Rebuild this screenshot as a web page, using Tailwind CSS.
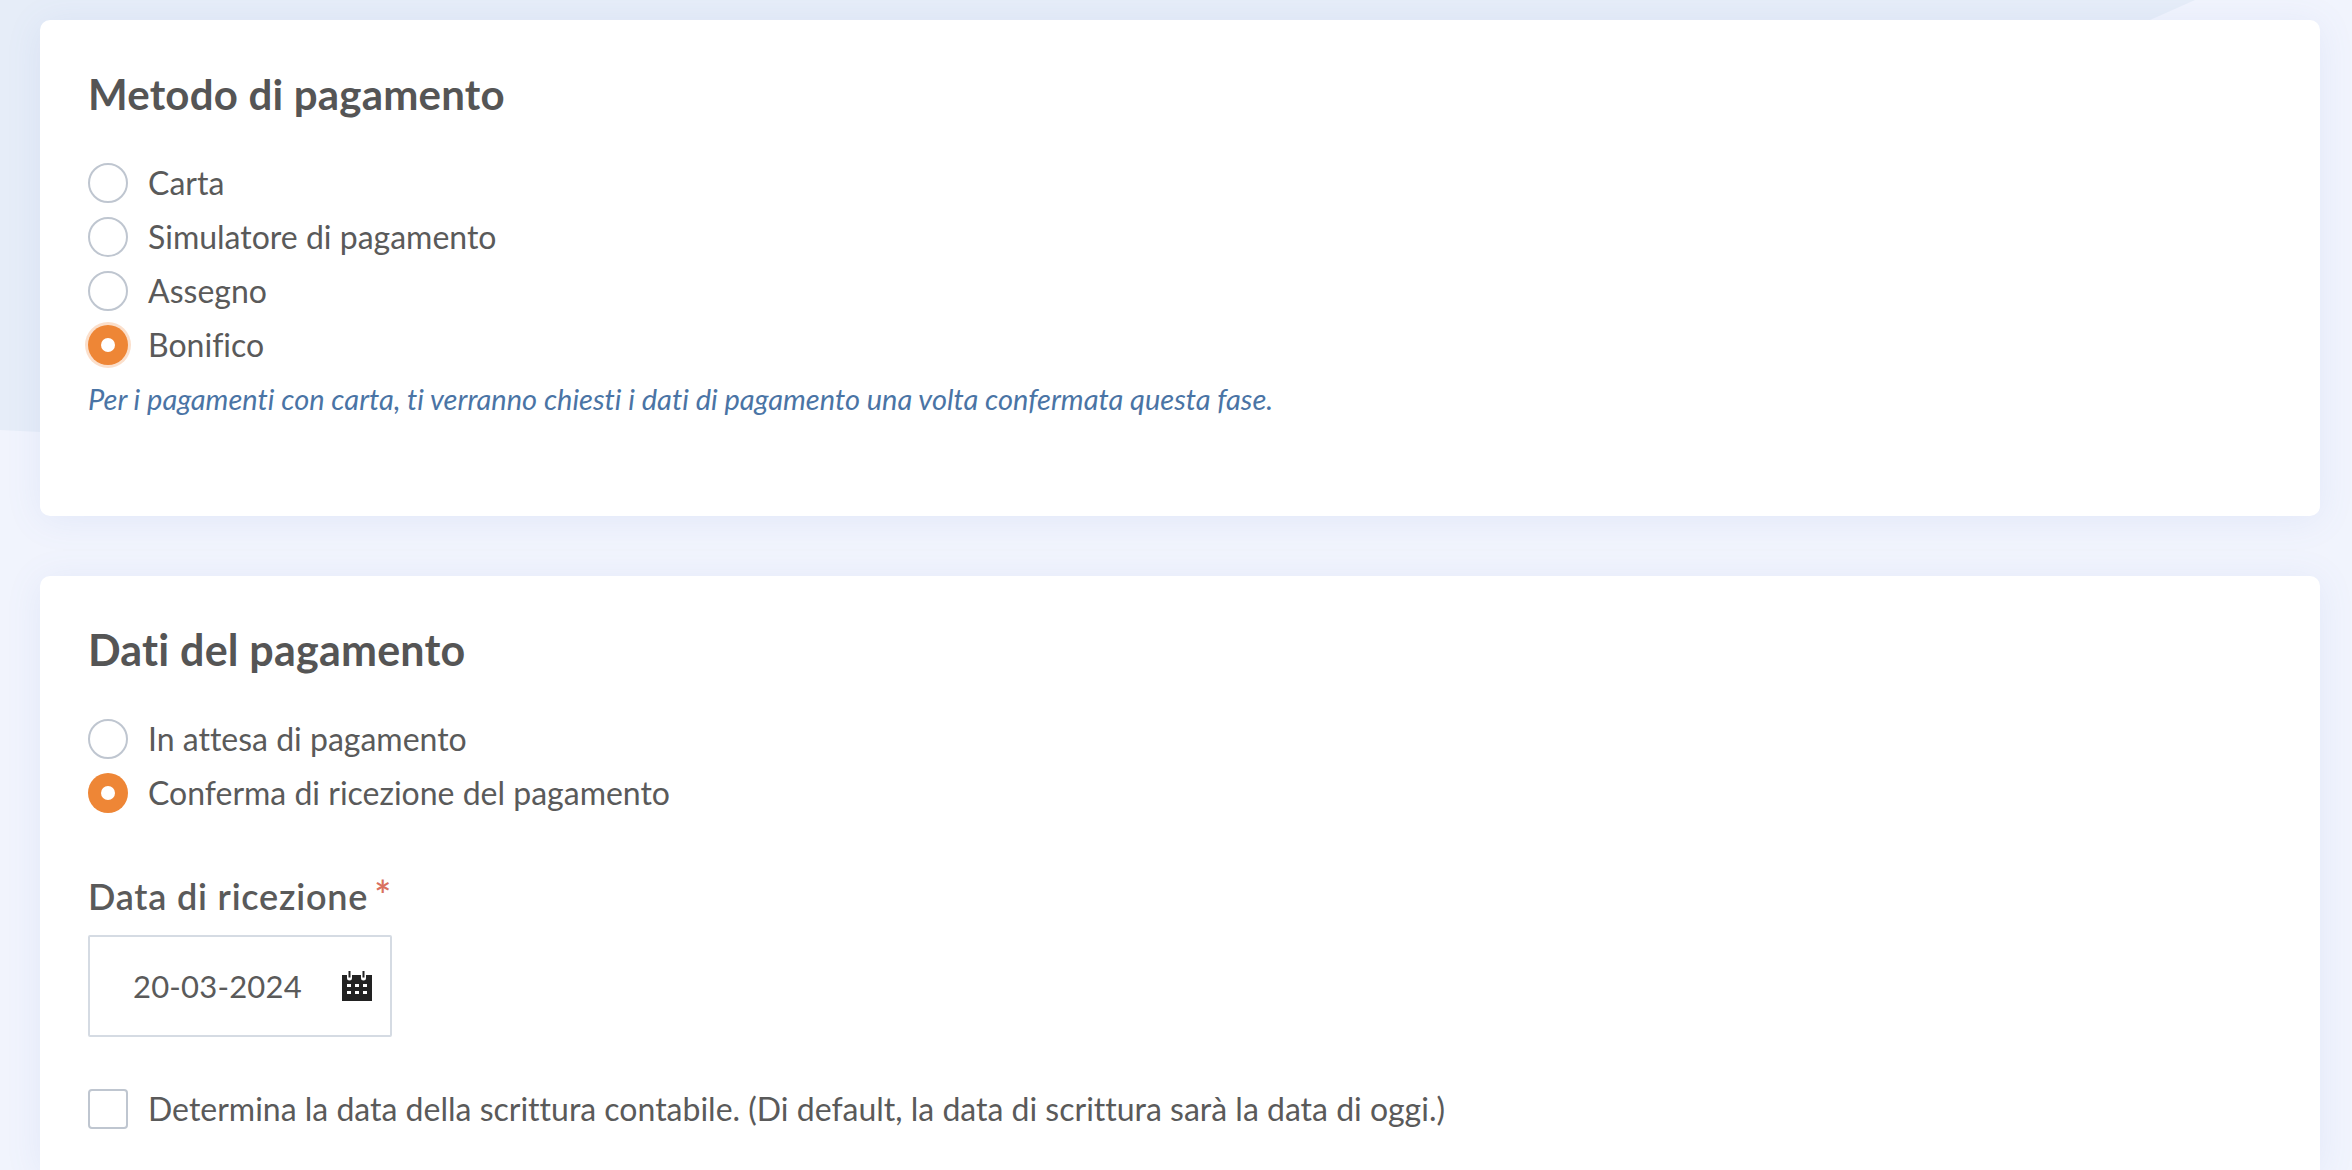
<!DOCTYPE html>
<html lang="it">
<head>
<meta charset="UTF-8">
<title>Pagamento</title>
<script src="https://cdn.jsdelivr.net/npm/@tailwindcss/browser@4"></script>
</head>
<body class="relative h-[1170px] overflow-hidden bg-[#f1f4fd] font-['Lato',sans-serif] text-[32px] text-[#5a5a5a] [font-variant-ligatures:none]">
  <!-- background shape behind the cards -->
  <svg class="absolute left-0 top-0" width="2352" height="440" viewBox="0 0 2352 440">
    <path d="M0 0H2195L2150 20L40 432L0 430Z" fill="#e6edf8"/>
  </svg>

  <div class="relative flex flex-col gap-[60px] px-[40px] pt-[20px] pr-[32px]">
    <section class="h-[496px] rounded-[10px] bg-white px-[48px] pt-[46px] shadow-[0_4px_36px_rgba(100,130,210,0.1)]">
      <h2 class="text-[42px] font-bold leading-[56px] tracking-[0.2px] text-[#555555]">Metodo di pagamento</h2>
      <div class="mt-[41px] flex flex-col gap-[14px]">
        <label class="flex h-[40px] items-center gap-[20px]"><span class="size-[40px] rounded-full border-2 border-[#bfc6d0]"></span>Carta</label>
        <label class="flex h-[40px] items-center gap-[20px]"><span class="size-[40px] rounded-full border-2 border-[#bfc6d0]"></span>Simulatore di pagamento</label>
        <label class="flex h-[40px] items-center gap-[20px]"><span class="size-[40px] rounded-full border-2 border-[#bfc6d0]"></span>Assegno</label>
        <label class="flex h-[40px] items-center gap-[20px]"><span class="flex size-[40px] items-center justify-center rounded-full bg-[#ee8636] shadow-[0_0_0_3px_#fbdfcb]"><span class="size-[14px] rounded-full bg-white"></span></span>Bonifico</label>
      </div>
      <p class="mt-[14px] text-[29px] italic leading-[40px] text-[#4a74a5]">Per i pagamenti con carta, ti verranno chiesti i dati di pagamento una volta confermata questa fase.</p>
    </section>

    <section class="h-[594px] rounded-t-[10px] bg-white px-[48px] pt-[46px] shadow-[0_4px_36px_rgba(100,130,210,0.1)]">
      <h2 class="text-[43px] font-bold leading-[56px] tracking-[0.2px] text-[#555555]">Dati del pagamento</h2>
      <div class="mt-[41px] flex flex-col gap-[14px]">
        <label class="flex h-[40px] items-center gap-[20px]"><span class="size-[40px] rounded-full border-2 border-[#bfc6d0]"></span>In attesa di pagamento</label>
        <label class="flex h-[40px] items-center gap-[20px]"><span class="flex size-[40px] items-center justify-center rounded-full bg-[#ee8636]"><span class="size-[14px] rounded-full bg-white"></span></span>Conferma di ricezione del pagamento</label>
      </div>
      <div class="mt-[59px] text-[36px] font-semibold leading-[48px] tracking-[0.8px]">Data di ricezione<span class="ml-[6px] text-[40px] leading-[40px] text-[#d9705f]">*</span></div>
      <div class="mt-[15px] flex h-[102px] w-[304px] items-center justify-between rounded-[2px] border-2 border-[#d5dbe3] pl-[43px] pr-[18px]">
        <span class="text-[31px] tracking-[0.2px]">20-03-2024</span>
        <svg width="30" height="30" viewBox="0 0 30 30" fill="#222222"><path fill-rule="evenodd" d="M0 4H5V7a2.500 2.500 0 0 0 5 0V4H19V7a2.500 2.500 0 0 0 5 0V4H30V30H0ZM5 13V16H9V13ZM13 13V16H17V13ZM21 13V16H25V13ZM5 20V23H9V20ZM13 20V23H17V20ZM21 20V23H25V20Z"/><path d="M6.500 0H8.500V6.500H6.500ZM20.500 0H22.500V6.500H20.500Z"/></svg>
      </div>
      <label class="mt-[52px] flex h-[40px] items-center gap-[20px]"><span class="size-[40px] rounded-[4px] border-2 border-[#bfc6d0]"></span>Determina la data della scrittura contabile. (Di default, la data di scrittura sarà la data di oggi.)</label>
    </section>
  </div>
</body>
</html>
